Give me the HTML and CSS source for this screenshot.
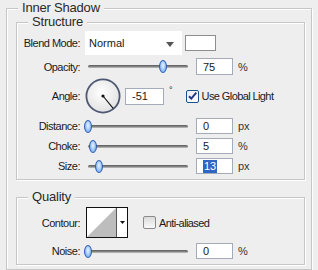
FILE: index.html
```html
<!DOCTYPE html>
<html lang="en">
<head>
    <meta charset="UTF-8">
    <title>Inner Shadow</title>
    <link rel="stylesheet" href="styles.css">
</head>
<body>
    <div class="panel">
        <div class="title">Inner Shadow</div>

        <div class="group structure">
            <div class="title">Structure</div>

            <div class="row blend-row">
                <span class="lbl">Blend Mode:</span>
                <div class="select">
                    <span>Normal</span>
                    <svg class="arrow" width="8" height="5" viewBox="0 0 8 5"><path d="M0 0H8L4 5Z" fill="#555"/></svg>
                </div>
                <div class="swatch"></div>
            </div>

            <div class="row opacity-row">
                <span class="lbl">Opacity:</span>
                <div class="slider"><div class="track"><div class="thumb" style="left:75px"></div></div></div>
                <div class="field">75</div>
                <span class="unit">%</span>
            </div>

            <div class="row angle-row">
                <span class="lbl">Angle:</span>
                <svg class="dial" width="36" height="36" viewBox="0 0 36 36">
                    <defs>
                        <radialGradient id="dialFill" cx="45%" cy="40%" r="60%">
                            <stop offset="0" stop-color="#ffffff"/>
                            <stop offset="1" stop-color="#e2e2e2"/>
                        </radialGradient>
                    </defs>
                    <circle cx="18" cy="18" r="16.6" fill="url(#dialFill)" stroke="#4d5872" stroke-width="1.8"/>
                    <line x1="18" y1="18" x2="28.2" y2="30.4" stroke="#111" stroke-width="1.1"/>
                    <circle cx="18" cy="18" r="1.6" fill="#111"/>
                </svg>
                <div class="field angle-field">-51</div>
                <span class="deg">°</span>
                <span class="check checked">
                    <svg width="11" height="11" viewBox="0 0 11 11"><path d="M2 5.2L4.3 7.6L9.3 1.6" fill="none" stroke="#1d3a86" stroke-width="2"/></svg>
                </span>
                <span class="check-text">Use Global Light</span>
            </div>

            <div class="row small-row">
                <span class="lbl">Distance:</span>
                <div class="slider"><div class="track"><div class="thumb" style="left:0px"></div></div></div>
                <div class="field">0</div>
                <span class="unit">px</span>
            </div>

            <div class="row small-row">
                <span class="lbl">Choke:</span>
                <div class="slider"><div class="track"><div class="thumb" style="left:5px"></div></div></div>
                <div class="field">5</div>
                <span class="unit">%</span>
            </div>

            <div class="row small-row">
                <span class="lbl">Size:</span>
                <div class="slider"><div class="track"><div class="thumb" style="left:11px"></div></div></div>
                <div class="field"><span class="sel">13</span></div>
                <span class="unit">px</span>
            </div>
        </div>

        <div class="group quality">
            <div class="title">Quality</div>

            <div class="row contour-row">
                <span class="lbl">Contour:</span>
                <div class="contour">
                    <svg width="29" height="29" viewBox="0 0 29 29"><path d="M0 29L29 0V29Z" fill="#bdbdbd"/></svg>
                    <div class="contour-btn">
                        <svg width="5" height="3" viewBox="0 0 5 3"><path d="M0 0H5L2.5 3Z" fill="#111"/></svg>
                    </div>
                </div>
                <span class="check"></span>
                <span class="check-text">Anti-aliased</span>
            </div>

            <div class="row small-row noise-row">
                <span class="lbl">Noise:</span>
                <div class="slider"><div class="track"><div class="thumb" style="left:0px"></div></div></div>
                <div class="field">0</div>
                <span class="unit">%</span>
            </div>
        </div>
    </div>
</body>
</html>
```

FILE: styles.css
```css
* {
    margin: 0;
    padding: 0;
    box-sizing: border-box;
}

body {
    background: #eeeeee;
    font-family: "Liberation Sans", Arial, sans-serif;
    font-size: 11px;
    color: #1a1a1a;
    overflow: hidden;
}

/* etched group boxes */
.panel,
.group {
    border: 1px solid #c6c6c6;
    box-shadow: inset 1px 1px 0 #ffffff, 1px 1px 0 #ffffff;
}

.panel {
    margin: 8px 6px 0 6px;
    height: 262px;
}

.title {
    display: table;
    margin: -8px 0 0 11px;
    padding: 0 4px;
    height: 14px;
    line-height: 14px;
    font-size: 13px;
    letter-spacing: -0.2px;
    color: #2a2a2a;
    background: #eeeeee;
}

.group {
    margin: 0 6px 0 9px;
}

.structure {
    margin-top: 7px;
    padding-bottom: 5px;
}

.quality {
    margin-top: 17px;
    padding-bottom: 5px;
}

.row {
    display: flex;
    align-items: center;
}

.lbl {
    width: 63px;
    margin-right: 5px;
    text-align: right;
    letter-spacing: -0.5px;
    white-space: nowrap;
}

.blend-row {
    height: 24px;
    margin-top: 2px;
}

.select {
    width: 97px;
    height: 24px;
    background: #ffffff;
    display: flex;
    align-items: center;
    justify-content: space-between;
    padding: 0 8px 0 4px;
    font-size: 11px;
}

.select .arrow {
    margin-top: 2px;
}

.swatch {
    width: 31px;
    height: 16px;
    margin-left: 3px;
    background: #ffffff;
    border: 1px solid #8d8d8d;
}

.opacity-row {
    height: 17px;
    margin-top: 3px;
}

.angle-row {
    height: 36px;
    margin-top: 3px;
}

.small-row {
    height: 16px;
    margin-top: 4px;
}

/* sliders */
.slider {
    width: 106px;
    height: 100%;
    padding: 0 3px;
    display: flex;
    align-items: center;
}

.track {
    flex: 1;
    height: 3px;
    position: relative;
    border-radius: 2px;
    background: linear-gradient(#5a5a5a, #8a8a8a 60%, #c8c8c8);
}

.thumb {
    position: absolute;
    top: -5px;
    margin-left: -4px;
    width: 8px;
    height: 13px;
    border-radius: 50%;
    border: 1px solid #2f5fb5;
    background: radial-gradient(ellipse at 50% 40%, #eaf4ff 0%, #a9cdf7 45%, #4f8ee0 100%);
}

.field {
    width: 37px;
    height: 100%;
    margin-left: 5px;
    background: #ffffff;
    border: 1px solid #a3acb8;
    padding-left: 6px;
    display: flex;
    align-items: center;
    font-size: 11px;
}

.field .sel {
    background: #3165c4;
    color: #ffffff;
    padding: 0 1px;
    line-height: 13px;
}

.unit {
    margin-left: 5px;
    color: #333333;
}

.angle-field {
    width: 39px;
    height: 17px;
    margin-left: 4px;
}

.deg {
    margin-left: 5px;
    align-self: flex-start;
    margin-top: 7px;
    font-size: 9px;
}

/* checkboxes */
.check {
    width: 13px;
    height: 13px;
    border: 1px solid #8a8a8a;
    border-radius: 2px;
    background: linear-gradient(#dcdcdc, #f8f8f8);
    display: flex;
    align-items: center;
    justify-content: center;
}

.check.checked {
    margin-left: 13px;
    border-color: #1e4f85;
    background: linear-gradient(135deg, #e8eef8, #ffffff);
}

.check-text {
    margin-left: 3px;
    letter-spacing: -0.6px;
}

/* contour picker */
.contour-row {
    height: 31px;
    margin-top: 3px;
}

.contour {
    width: 42px;
    height: 31px;
    margin-left: 1px;
    border: 1px solid #111111;
    background: #ffffff;
    display: flex;
}

.contour svg {
    display: block;
}

.contour-btn {
    flex: 1;
    border-left: 1px solid #555555;
    display: flex;
    align-items: center;
    justify-content: center;
}

.contour-row .check {
    margin-left: 15px;
}

.noise-row {
    margin-top: 5px;
}
```
